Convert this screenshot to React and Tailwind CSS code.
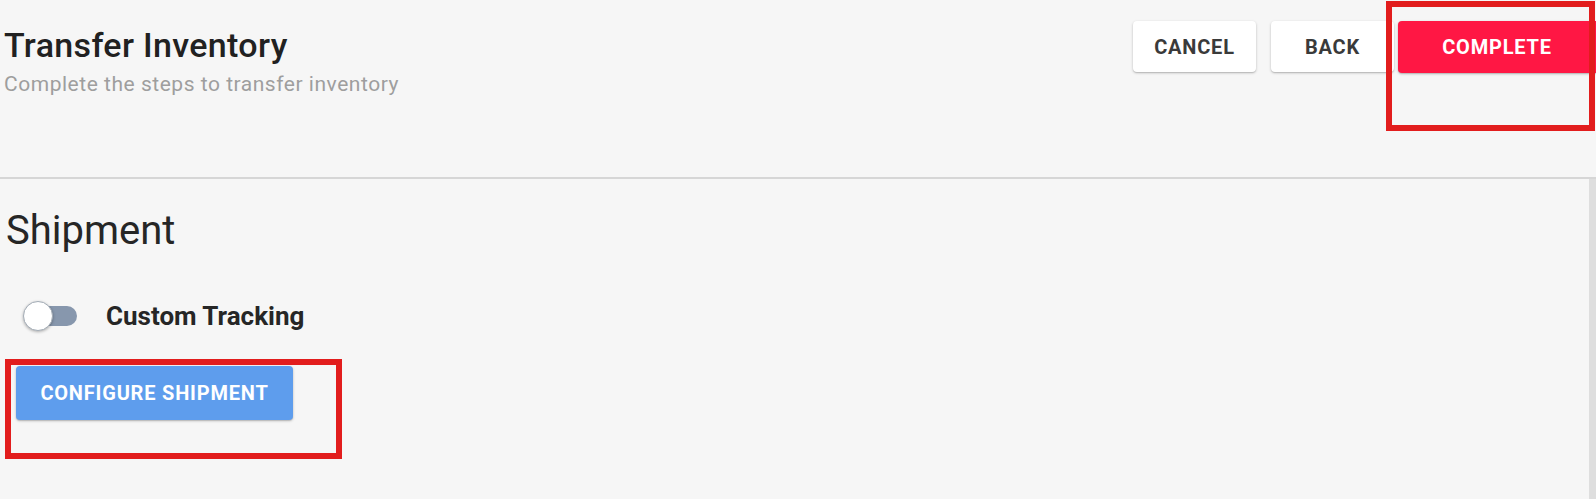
import React from "react";

export default function App() {
  return (
    <div className="relative w-[1596px] min-h-[499px] overflow-hidden bg-[#f6f6f6] font-['Roboto',sans-serif]">
      {/* Header */}
      <div className="flex h-[177px] justify-between">
        <div className="pl-[4px] pt-[25px]">
          <h1 className="text-[34px] leading-[40px] font-medium tracking-[0.01em] text-[#212121]">Transfer Inventory</h1>
          <p className="mt-[6px] text-[21px] leading-[26px] tracking-[0.025em] text-[#9e9e9e]">Complete the steps to transfer inventory</p>
        </div>
        <div className="flex items-start pt-[21px]">
          <button className="h-[51px] w-[123px] rounded-[4px] bg-white text-[20px] font-bold uppercase tracking-[0.04em] text-[#3a3a3a] shadow-[0_1px_3px_rgba(0,0,0,0.2),0_1px_1px_rgba(0,0,0,0.12)]">
            Cancel
          </button>
          <button className="ml-[15px] h-[51px] w-[123px] rounded-[4px] bg-white text-[20px] font-bold uppercase tracking-[0.04em] text-[#3a3a3a] shadow-[0_1px_3px_rgba(0,0,0,0.2),0_1px_1px_rgba(0,0,0,0.12)]">
            Back
          </button>
          <button className="ml-[4px] h-[52px] w-[198px] rounded-l-[4px] bg-[#ff1744] text-[20px] font-bold uppercase tracking-[0.04em] text-white shadow-[0_1px_3px_rgba(0,0,0,0.2),0_1px_1px_rgba(0,0,0,0.12)]">
            Complete
          </button>
        </div>
      </div>

      {/* Divider */}
      <div className="h-[2px] bg-[#d6d6d6]" />

      {/* Body */}
      <div className="flex min-h-[320px]">
        <div className="flex-1 pl-[6px] pt-[28px]">
          <h2 className="text-[40px] leading-[48px] font-normal text-[#262626]">Shipment</h2>

          <div className="mt-[45px] flex h-[32px] items-center">
            <div className="relative ml-[17px] h-[30px] w-[54px]">
              <div className="absolute left-[8px] right-0 top-[5px] h-[20px] rounded-full bg-[#8797ad]" />
              <div className="absolute left-0 top-0 h-[30px] w-[30px] rounded-full border border-[#a3acb6] bg-white shadow-[0_1px_3px_rgba(0,0,0,0.3)]" />
            </div>
            <span className="ml-[29px] text-[26px] font-bold text-[#262626]">Custom Tracking</span>
          </div>

          <button className="ml-[10px] mt-[34px] h-[54px] w-[277px] rounded-[4px] bg-[#5e9ded] text-[20px] font-bold uppercase tracking-[0.04em] text-white shadow-[0_1px_3px_rgba(0,0,0,0.2),0_1px_1px_rgba(0,0,0,0.12)]">
            Configure Shipment
          </button>
        </div>
        <div className="w-[7px] self-stretch bg-[#dedede]" />
      </div>

      {/* Annotation boxes */}
      <div className="pointer-events-none absolute left-[1386px] top-[1px] h-[130px] w-[209px] border-[6px] border-[#e21d1d]" />
      <div className="pointer-events-none absolute left-[5px] top-[359px] h-[100px] w-[337px] border-[6px] border-[#e21d1d]" />
    </div>
  );
}
